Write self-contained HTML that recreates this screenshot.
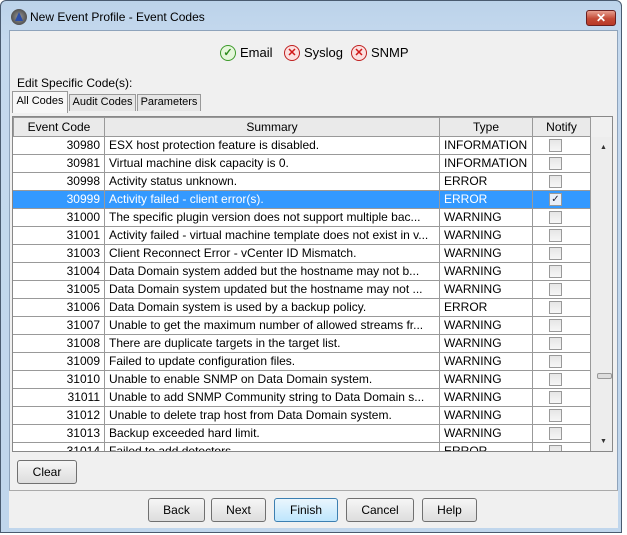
<!DOCTYPE html><html><head><style>
*{box-sizing:border-box;margin:0;padding:0}
body{width:627px;height:535px;overflow:hidden;background:#fff;font-family:"Liberation Sans",Arial,sans-serif;font-size:12px;color:#000;position:relative}
.frame{position:absolute;left:0;top:0;width:622px;height:533px;background:linear-gradient(#bcd3ea,#c5d9ee 40px,#c0d6ec);border:1px solid #4a5b70;border-radius:6px 6px 0 0}
.title{position:absolute;left:30px;top:10px;font-size:12px;color:#000}
.logo{position:absolute;left:11px;top:9px;width:16px;height:16px;border-radius:50%;background:radial-gradient(#999,#333);}
.logo:after{content:"";position:absolute;left:4px;top:3px;border-left:4px solid transparent;border-right:4px solid transparent;border-bottom:9px solid #2b4ea8}
.close{position:absolute;left:586px;top:10px;width:30px;height:16px;border:1px solid #6b2020;border-radius:3px;background:linear-gradient(#e8a090,#c44a36 55%,#b83a28);color:#fff;font-weight:bold;font-size:12px;text-align:center;line-height:14px}
.inner{position:absolute;left:9px;top:30px;width:609px;height:498px;background:#f0f0f0;border:1px solid #8ea3bb}
.abs{position:absolute}
.opt{position:absolute;top:44px;height:17px;font-size:13px;display:flex;align-items:center}
.ic{display:inline-block;width:16px;height:16px;border-radius:50%;margin-right:4px;text-align:center;font-size:11px;line-height:14px;font-weight:bold}
.ok{border:1px solid #3c9a2a;background:#e4f6da;color:#2e8a1e}
.no{border:1px solid #c02020;background:#fbe0e0;color:#d01818}
.tab{position:absolute;top:94px;height:17px;border:1px solid #999;border-bottom:none;background:#e6e6e6;font-size:11px;line-height:15px;text-align:center;white-space:nowrap}
.tbl{position:absolute;left:12px;top:116px;width:601px;height:336px;border:1px solid #888;background:#f0f0f0;overflow:hidden}
.hd{position:absolute;top:0;height:20px;border:1px solid #999;border-left:none;background:#eaeaea;font-size:12px;text-align:center;line-height:19px}
.row{position:absolute;left:0;width:578px;height:18px;background:#fff;border-bottom:1px solid #999;font-size:12px;line-height:17px}
.row.sel{background:#3399ff;color:#fff}
.c{position:absolute;top:0;height:18px;border-right:1px solid #999;white-space:nowrap;overflow:hidden;padding:0 4px}
.cb{position:absolute;left:536px;top:2px;width:13px;height:13px;border:1px solid #999;background:linear-gradient(#e6e6e6,#f6f6f6)}
.sel .cb{background:#e8eef8;color:#223;font-size:10px;line-height:11px;text-align:center}
.btn{position:absolute;height:24px;border:1px solid #707070;border-radius:3px;background:linear-gradient(#f6f6f6,#dddddd);text-align:center;line-height:22px;font-size:12px}
</style></head><body>
<div class="frame"></div>
<div class="logo"></div>
<div class="title">New Event Profile - Event Codes</div>
<div class="close">✕</div>
<div class="inner"></div>
<div class="opt" style="left:220px"><span class="ic ok">✓</span>Email</div>
<div class="opt" style="left:284px"><span class="ic no">✕</span>Syslog</div>
<div class="opt" style="left:351px"><span class="ic no">✕</span>SNMP</div>
<div class="abs" style="left:17px;top:76px;font-size:12px">Edit Specific Code(s):</div>
<div class="tab" style="left:12px;top:91px;height:22px;background:#f7f7f7;line-height:19px;width:56px">All Codes</div>
<div class="tab" style="left:69px;width:67px">Audit Codes</div>
<div class="tab" style="left:137px;width:64px">Parameters</div>
<div class="tbl">
<div class="hd" style="left:0;width:92px;border-left:1px solid #999">Event Code</div>
<div class="hd" style="left:92px;width:335px">Summary</div>
<div class="hd" style="left:427px;width:93px">Type</div>
<div class="hd" style="left:520px;width:58px">Notify</div>
<div id="rows"></div>
<div class="abs" style="left:578px;top:20px;width:22px;height:314px;background:#ededed"></div>
<div class="abs" style="left:587px;top:27px;font-size:7px;color:#333">▲</div>
<div class="abs" style="left:587px;top:321px;font-size:7px;color:#333">▼</div>
<div class="abs" style="left:584px;top:256px;width:15px;height:6px;border:1px solid #999;border-radius:2px;background:#ddd"></div>
</div>
<div class="btn" style="left:17px;top:460px;width:60px">Clear</div>
<div class="abs" style="left:9px;top:490px;width:609px;border-top:1px solid #aaa"></div>
<div class="abs" style="left:9px;top:491px;width:609px;height:37px;background:#f0f0f0"></div>
<div class="btn" style="left:148px;top:498px;width:57px">Back</div>
<div class="btn" style="left:211px;top:498px;width:55px">Next</div>
<div class="btn" style="left:274px;top:498px;width:64px;border-color:#3c7fb1;background:linear-gradient(#eaf6fd,#bee6fd)">Finish</div>
<div class="btn" style="left:346px;top:498px;width:68px">Cancel</div>
<div class="btn" style="left:422px;top:498px;width:55px">Help</div>
<script>
var d=[["30980","ESX host protection feature is disabled.","INFORMATION"],["30981","Virtual machine disk capacity is 0.","INFORMATION"],["30998","Activity status unknown.","ERROR"],["30999","Activity failed - client error(s).","ERROR"],["31000","The specific plugin version does not support multiple bac...","WARNING"],["31001","Activity failed - virtual machine template does not exist in v...","WARNING"],["31003","Client Reconnect Error - vCenter ID Mismatch.","WARNING"],["31004","Data Domain system added but the hostname may not b...","WARNING"],["31005","Data Domain system updated but the hostname may not ...","WARNING"],["31006","Data Domain system is used by a backup policy.","ERROR"],["31007","Unable to get the maximum number of allowed streams fr...","WARNING"],["31008","There are duplicate targets in the target list.","WARNING"],["31009","Failed to update configuration files.","WARNING"],["31010","Unable to enable SNMP on Data Domain system.","WARNING"],["31011","Unable to add SNMP Community string to Data Domain s...","WARNING"],["31012","Unable to delete trap host from Data Domain system.","WARNING"],["31013","Backup exceeded hard limit.","WARNING"],["31014","Failed to add detectors.","ERROR"]];
var h="";d.forEach(function(r,i){h+='<div class="row'+(i==3?' sel':'')+'" style="top:'+(20+i*18)+'px"><div class="c" style="left:0;width:92px;text-align:right">'+r[0]+'</div><div class="c" style="left:92px;width:335px">'+r[1]+'</div><div class="c" style="left:427px;width:93px">'+r[2]+'</div><div class="c" style="left:520px;width:58px"></div><div class="cb">'+(i==3?'✓':'')+'</div></div>';});
document.getElementById("rows").innerHTML=h;
</script>
</body></html>
